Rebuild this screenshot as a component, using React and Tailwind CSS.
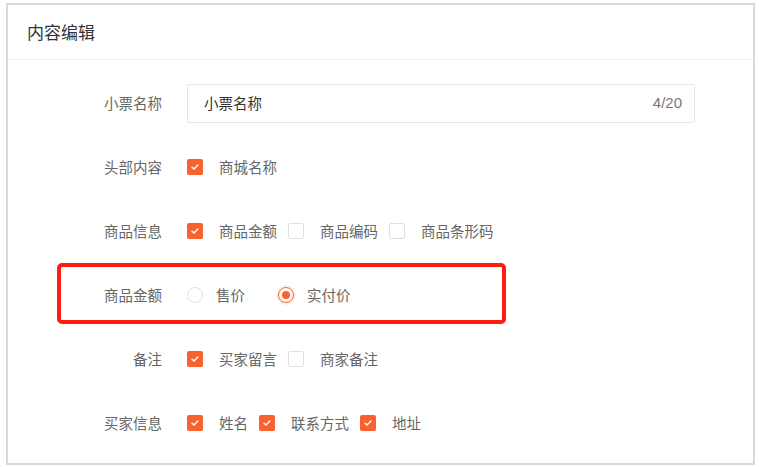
import React from 'react';

const ORANGE = 'bg-[#f9622f]';

function Check({ checked }) {
  return checked ? (
    <span className={`flex h-4 w-4 shrink-0 items-center justify-center rounded-[2px] ${ORANGE}`}>
      <svg viewBox="0 0 16 16" className="h-3 w-3" fill="none" stroke="white" strokeWidth="1.8" strokeLinecap="round" strokeLinejoin="round">
        <path d="M4 8.2l2.6 2.6L12 5.4" />
      </svg>
    </span>
  ) : (
    <span className="h-4 w-4 shrink-0 rounded-[2px] border border-[#dcdfe6] bg-white" />
  );
}

function Radio({ checked }) {
  return checked ? (
    <span className="flex h-4 w-4 shrink-0 items-center justify-center rounded-full border border-[#f9622f] bg-white shadow-[0_0_0_2px_rgba(249,98,47,0.12)]">
      <span className={`h-2 w-2 rounded-full ${ORANGE}`} />
    </span>
  ) : (
    <span className="h-4 w-4 shrink-0 rounded-full border border-[#dcdfe6] bg-white" />
  );
}

function Row({ label, children }) {
  return (
    <div className="flex h-10 items-center">
      <div className="w-[154px] shrink-0 text-right text-[#666]">{label}</div>
      <div className="ml-[25px] flex items-center">{children}</div>
    </div>
  );
}

function CheckItem({ checked, text, last }) {
  return (
    <div className={`flex items-center ${last ? '' : 'mr-[11px]'}`}>
      <Check checked={checked} />
      <span className="ml-4 text-[#666]">{text}</span>
    </div>
  );
}

export default function App() {
  return (
    <div className="h-[467px] w-[759px] bg-white pl-[6px] pt-[3px] text-[14.5px]" style={{ fontFamily: '"Noto Sans CJK SC", "Noto Sans", sans-serif' }}>
      <div className="relative h-[462px] w-[749px] border-2 border-[#d9d9d9] bg-white">
        <div className="flex h-[55px] items-center border-b border-[#eeeeee] pl-[19px] text-[17px] text-[#333]">
          内容编辑
        </div>

        <div className="flex flex-col gap-6 pt-[23px]">
          <Row label="小票名称">
            <div className="flex h-[39px] w-[508px] items-center justify-between rounded-[2px] border border-[#e6e6e6] pl-4 pr-[12px] text-[#333]">
              <span>小票名称</span>
              <span className="text-[15px] text-[#777]" style={{ fontFamily: '"Liberation Sans", sans-serif' }}>4/20</span>
            </div>
          </Row>

          <Row label="头部内容">
            <CheckItem checked text="商城名称" last />
          </Row>

          <Row label="商品信息">
            <CheckItem checked text="商品金额" />
            <CheckItem text="商品编码" />
            <CheckItem text="商品条形码" last />
          </Row>

          <Row label="商品金额">
            <div className="flex items-center">
              <Radio />
              <span className="ml-[13px] text-[#666]">售价</span>
            </div>
            <div className="ml-[33px] flex items-center">
              <Radio checked />
              <span className="ml-[13px] text-[#666]">实付价</span>
            </div>
          </Row>

          <Row label="备注">
            <CheckItem checked text="买家留言" />
            <CheckItem text="商家备注" last />
          </Row>

          <Row label="买家信息">
            <CheckItem checked text="姓名" />
            <CheckItem checked text="联系方式" />
            <CheckItem checked text="地址" last />
          </Row>
        </div>

        <div className="pointer-events-none absolute left-[49px] top-[258px] h-[61px] w-[449px] rounded-[5px] border-4 border-[#ff1a12]" />
      </div>
    </div>
  );
}
